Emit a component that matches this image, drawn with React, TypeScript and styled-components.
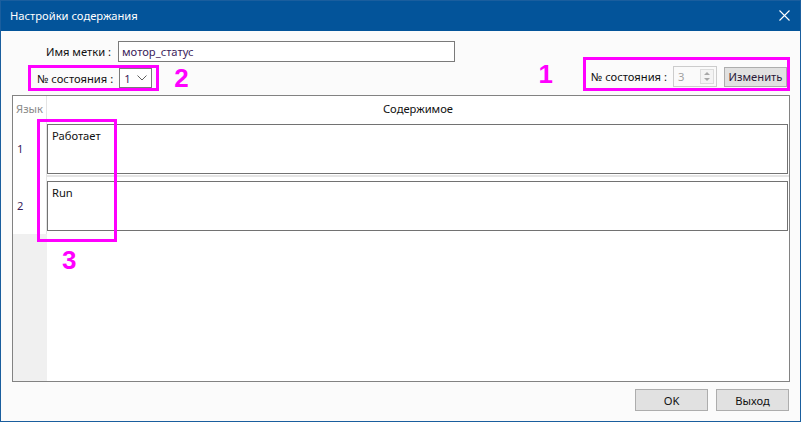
import React from "react";
import styled, { createGlobalStyle } from "styled-components";

const Global = createGlobalStyle`
  html, body { margin: 0; padding: 0; width: 801px; height: 422px; overflow: hidden; }
  body { font-family: "Noto Sans", "Open Sans", sans-serif; font-size: 11.2px; color: #111; }
  * { box-sizing: border-box; }
`;

const Window = styled.div`
  width: 801px;
  height: 422px;
  display: flex;
  flex-direction: column;
  border: 1px solid #1a5e9e;
  background: #fbfbfb;
`;

const TitleBar = styled.div`
  height: 30px;
  flex: none;
  background: #03549a;
  display: flex;
  align-items: center;
  justify-content: space-between;
  padding: 0 10px 1px 9px;
  color: #fff;
`;

const TitleText = styled.span`
  font-size: 11.2px;
`;

const Body = styled.div`
  flex: 1;
  display: flex;
  flex-direction: column;
  padding: 10px 10px 10px 11px;
  min-height: 0;
`;

const TopArea = styled.div`
  height: 50px;
  display: flex;
  align-items: flex-end;
`;

const LeftTop = styled.div`
  display: flex;
  flex-direction: column;
  gap: 3px;
`;

const FieldRow = styled.div`
  display: flex;
  align-items: center;
  gap: 7px;
`;

const Label = styled.span<{ $width?: number }>`
  display: inline-block;
  ${(p) => (p.$width ? `width: ${p.$width}px; text-align: right;` : "")}
  color: #111;
  white-space: nowrap;
`;

const TextInput = styled.div`
  width: 337px;
  height: 21px;
  border: 1px solid #7a7a7a;
  background: #fff;
  padding: 0 3px;
  display: flex;
  align-items: center;
  color: #3b1c5a;
`;

const Annot = styled.div<{ $height: number; $pt?: number; $pl?: number; $pr?: number; $ml?: number }>`
  height: ${(p) => p.$height}px;
  border: 3px solid #ff00ff;
  margin-left: ${(p) => p.$ml ?? 0}px;
  padding: ${(p) => p.$pt ?? 0}px ${(p) => p.$pr ?? 0}px 0 ${(p) => p.$pl ?? 0}px;
  display: flex;
  align-items: center;
  gap: 6px;
`;

const Digit = styled.span<{ $ml?: number }>`
  font-family: "Liberation Sans", Arial, sans-serif;
  font-weight: bold;
  font-size: 26px;
  line-height: 26px;
  color: #ff00ff;
  margin-left: ${(p) => p.$ml ?? 0}px;
`;

const Combo = styled.div`
  width: 33px;
  height: 20px;
  border: 1px solid #7a7a7a;
  background: #fff;
  display: flex;
  align-items: center;
  justify-content: space-between;
  padding: 0 4px 0 4px;
  color: #3b1c5a;
`;

const RightTop = styled.div`
  margin-left: auto;
  display: flex;
  align-items: center;
`;

const Spin = styled.div`
  width: 44px;
  height: 21px;
  border: 1px solid #cccccc;
  background: #fafafa;
  display: flex;
  align-items: center;
  justify-content: space-between;
  padding: 0 2px 0 4px;
  color: #a0a0a0;
`;

const SmallButton = styled.div`
  width: 63px;
  height: 20px;
  border: 1px solid #adadad;
  background: #e1e1e1;
  display: flex;
  align-items: center;
  justify-content: center;
  color: #2a1a3a;
  margin-left: 1px;
`;

const Grid = styled.div`
  margin-top: 4px;
  flex: 1;
  min-height: 0;
  border: 1px solid #828282;
  background: #fff;
  display: flex;
  flex-direction: column;
  position: relative;
`;

const Row = styled.div<{ $header?: boolean }>`
  display: flex;
  flex: none;
  ${(p) => (p.$header ? "height: 24px;" : "")}
`;

const LangCell = styled.div<{ $header?: boolean }>`
  width: 34px;
  flex: none;
  border-right: 1px solid #e4e4e4;
  display: flex;
  align-items: center;
  padding-left: ${(p) => (p.$header ? 3 : 4)}px;
  color: ${(p) => (p.$header ? "#8a8a8a" : "#3b1c5a")};
`;

const ContentHeader = styled.div`
  flex: 1;
  display: flex;
  align-items: center;
  justify-content: center;
  color: #111;
`;

const ContentCell = styled.div<{ $last?: boolean }>`
  flex: 1;
  padding: 4px 1px 1px 0;
  ${(p) => (!p.$last ? "border-bottom: 2px solid #e4e4e4;" : "padding-bottom: 3px;")}
`;

const ContentBox = styled.div`
  height: 50px;
  border: 1px solid #727272;
  padding: 3px 4px;
  color: #111;
  background: #fff;
`;

const Filler = styled.div`
  flex: 1;
  display: flex;
`;

const FillerLang = styled.div`
  width: 34px;
  background: #f0f0f0;
`;

const OverlayBox = styled.div`
  position: absolute;
  left: 24px;
  top: 23px;
  width: 80px;
  height: 123px;
  border: 3px solid #ff00ff;
  pointer-events: none;
`;

const OverlayDigit = styled(Digit)`
  position: absolute;
  left: 49px;
  top: 151px;
`;

const Footer = styled.div`
  margin-top: 7px;
  display: flex;
  justify-content: flex-end;
  gap: 8px;
  padding-right: 1px;
`;

const DialogButton = styled.div`
  width: 73px;
  height: 22px;
  border: 1px solid #adadad;
  background: #e1e1e1;
  display: flex;
  align-items: center;
  justify-content: center;
  color: #111;
`;

const Chevron = () => (
  <svg width="10" height="6" viewBox="0 0 10 6">
    <path d="M0.5 0.5 L5 5 L9.5 0.5" fill="none" stroke="#606060" strokeWidth="1" />
  </svg>
);

const SpinArrows = () => (
  <svg width="14" height="15" viewBox="0 0 14 15">
    <rect x="0.5" y="0.5" width="13" height="14" fill="#f4f4f4" stroke="#dcdcdc" />
    <path d="M4 6 L7 3 L10 6 Z" fill="#a8a8a8" />
    <path d="M4 9 L7 12 L10 9 Z" fill="#a8a8a8" />
  </svg>
);

const CloseIcon = () => (
  <svg width="11" height="11" viewBox="0 0 11 11">
    <path d="M0.5 0.5 L10.5 10.5 M10.5 0.5 L0.5 10.5" stroke="#fff" strokeWidth="1.1" />
  </svg>
);

const rows = [
  { lang: "1", text: "Работает" },
  { lang: "2", text: "Run" },
];

export default function App() {
  return (
    <>
      <Global />
      <Window>
        <TitleBar>
          <TitleText>Настройки содержания</TitleText>
          <CloseIcon />
        </TitleBar>
        <Body>
          <TopArea>
            <LeftTop>
              <FieldRow>
                <Label $width={99}>Имя метки :</Label>
                <TextInput>мотор_статус</TextInput>
              </FieldRow>
              <FieldRow>
                <Annot $height={26} $ml={16} $pl={6} $pr={4}>
                  <Label>№ состояния :</Label>
                  <Combo>
                    <span>1</span>
                    <Chevron />
                  </Combo>
                </Annot>
                <Digit $ml={8}>2</Digit>
              </FieldRow>
            </LeftTop>
            <RightTop>
              <Digit>1</Digit>
              <Annot $height={34} $ml={30} $pt={5} $pl={5}>
                <Label>№ состояния :</Label>
                <Spin>
                  <span>3</span>
                  <SpinArrows />
                </Spin>
                <SmallButton>Изменить</SmallButton>
              </Annot>
            </RightTop>
          </TopArea>
          <Grid>
            <Row $header>
              <LangCell $header>Язык</LangCell>
              <ContentHeader>Содержимое</ContentHeader>
            </Row>
            {rows.map((r, i) => (
              <Row key={r.lang}>
                <LangCell>{r.lang}</LangCell>
                <ContentCell $last={i === rows.length - 1}>
                  <ContentBox>{r.text}</ContentBox>
                </ContentCell>
              </Row>
            ))}
            <Filler>
              <FillerLang />
            </Filler>
            <OverlayBox />
            <OverlayDigit>3</OverlayDigit>
          </Grid>
          <Footer>
            <DialogButton>OK</DialogButton>
            <DialogButton>Выход</DialogButton>
          </Footer>
        </Body>
      </Window>
    </>
  );
}
